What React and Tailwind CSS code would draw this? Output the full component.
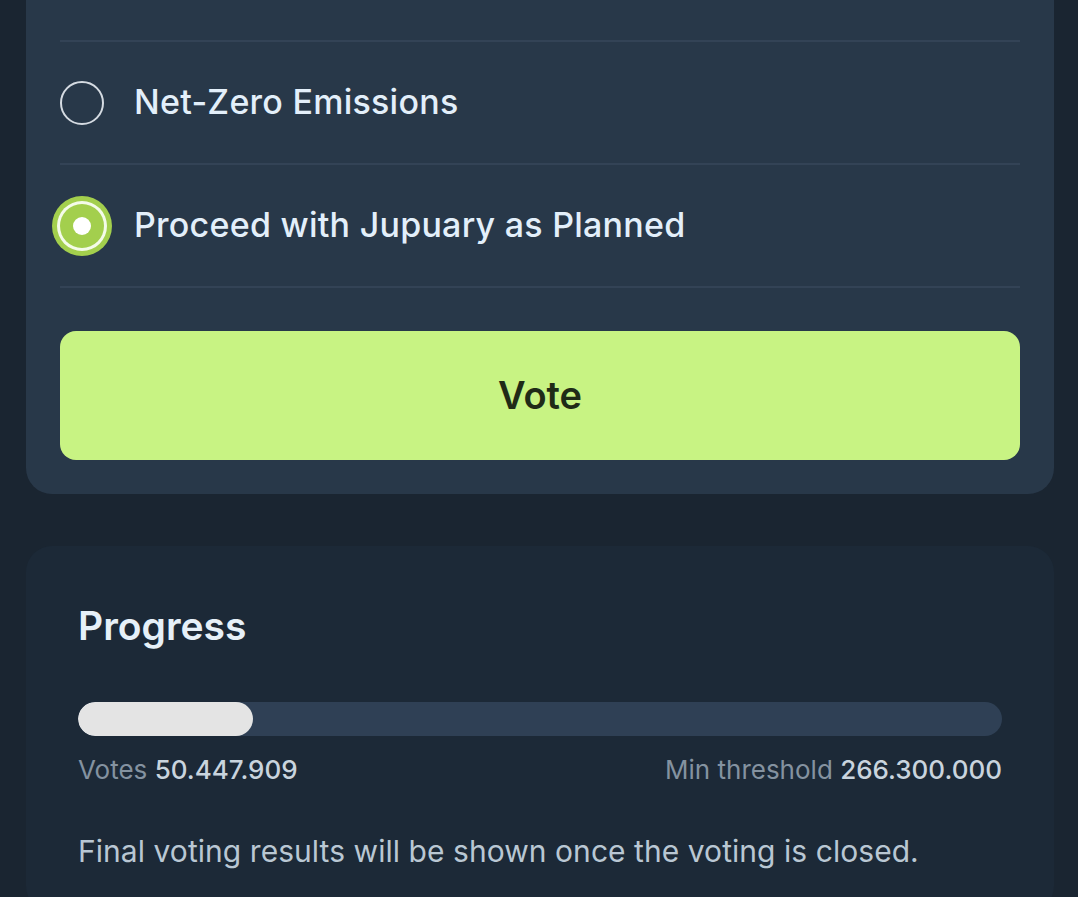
import { useState } from 'react';

const options = ['Net-Zero Emissions', 'Proceed with Jupuary as Planned'];

function Radio({ checked }) {
  if (checked) {
    return (
      <span className="flex items-center justify-center w-[60px] h-[60px] -mx-[8px] rounded-full bg-[#a3cf4d] shrink-0">
        <span className="flex items-center justify-center w-[50px] h-[50px] rounded-full bg-[#f4fbe9]">
          <span className="flex items-center justify-center w-[44px] h-[44px] rounded-full bg-[#a3cf4d]">
            <span className="w-[18px] h-[18px] rounded-full bg-white" />
          </span>
        </span>
      </span>
    );
  }
  return <span className="w-[44px] h-[44px] rounded-full border-2 border-[#d5dbe2] shrink-0" />;
}

export default function App() {
  const [selected, setSelected] = useState(1);
  const votes = 50447909;
  const threshold = 266300000;
  const pct = (votes / threshold) * 100;

  return (
    <div className="h-[897px] overflow-hidden bg-[#1a2531] pl-[26px] pr-[24px] font-['Inter','Noto_Sans',sans-serif]">
      {/* Options card */}
      <div className="bg-[#283849] rounded-b-[26px] px-[34px] pt-[40px] pb-[34px]">
        <div className="border-t-2 border-[#334356]">
          {options.map((opt, i) => (
            <button
              key={opt}
              onClick={() => setSelected(i)}
              className="w-full flex items-center gap-[30px] h-[123px] border-b-2 border-[#334356] text-left"
            >
              <Radio checked={selected === i} />
              <span className="text-[34px] tracking-[0.25px] leading-[40px] text-[#e3effa] font-medium -mt-[1px]">{opt}</span>
            </button>
          ))}
        </div>
        <button className="mt-[43px] w-full h-[129px] rounded-[16px] bg-[#c8f383] text-[#1f2b17] text-[38px] font-semibold">
          Vote
        </button>
      </div>

      {/* Progress card */}
      <div className="mt-[52px] bg-[#1c2937] rounded-[26px] px-[52px] pt-[56px] pb-[40px]">
        <h2 className="text-[39px] font-semibold text-[#e6f0f8] leading-[48px]">Progress</h2>
        <div className="mt-[52px] h-[34px] rounded-full bg-[#2f4055] overflow-hidden">
          <div className="h-full rounded-full bg-[#e4e4e4]" style={{ width: `${pct}%` }} />
        </div>
        <div className="mt-[16px] flex justify-between text-[26px] leading-[36px]">
          <span className="text-[#8492a0]">
            Votes <span className="text-[#c9d4de] font-medium">50.447.909</span>
          </span>
          <span className="text-[#8492a0]">
            Min threshold <span className="text-[#c9d4de] font-medium">266.300.000</span>
          </span>
        </div>
        <p className="mt-[42px] text-[30px] tracking-[0.05px] text-[#b9c7d3] leading-[42px]">
          Final voting results will be shown once the voting is closed.
        </p>
      </div>
    </div>
  );
}
